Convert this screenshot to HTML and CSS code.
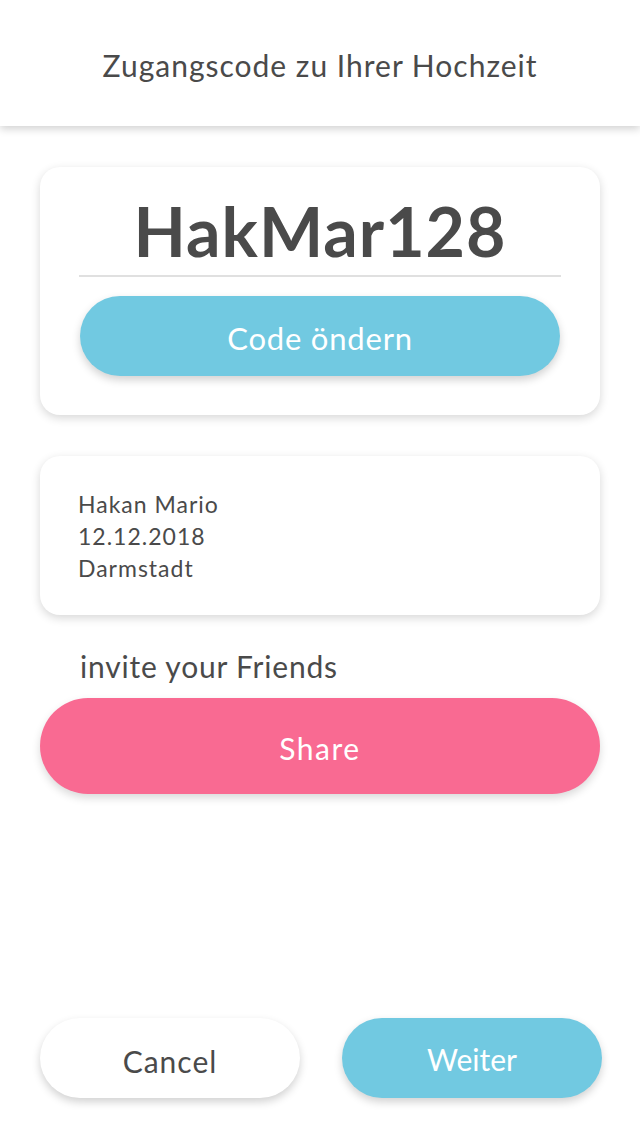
FILE: index.html
```html
<!DOCTYPE html>
<html lang="de">
<head>
<meta charset="utf-8">
<title>Zugangscode</title>
<link rel="stylesheet" href="styles.css">
</head>
<body>
<div class="screen">
  <header class="topbar">
    <h1 class="topbar-title">Zugangscode zu Ihrer Hochzeit</h1>
  </header>
  <main class="content">
    <section class="card code-card">
      <div class="code">HakMar128</div>
      <div class="code-line"></div>
      <button class="btn btn-blue btn-change">Code öndern</button>
    </section>
    <section class="card info-card">
      <div class="info-line">Hakan Mario</div>
      <div class="info-line">12.12.2018</div>
      <div class="info-line">Darmstadt</div>
    </section>
    <div class="invite">invite your Friends</div>
    <button class="btn btn-pink btn-share">Share</button>
  </main>
  <footer class="actions">
    <button class="btn btn-white btn-action btn-cancel">Cancel</button>
    <button class="btn btn-blue btn-action">Weiter</button>
  </footer>
</div>
</body>
</html>
```
FILE: styles.css
```css
* { box-sizing: border-box; }
html, body { margin: 0; padding: 0; background: #fff; }
body {
  font-family: Lato, "Open Sans", "Liberation Sans", sans-serif;
  color: #4a4a4a;
}
.screen {
  width: 640px;
  height: 1136px;
  display: flex;
  flex-direction: column;
  overflow: hidden;
}
.topbar {
  height: 126px;
  flex: none;
  display: flex;
  align-items: center;
  justify-content: center;
  padding-top: 4px;
  background: #fff;
  box-shadow: 0 3px 8px rgba(0,0,0,0.18);
  position: relative;
  z-index: 1;
}
.topbar-title {
  margin: 0;
  font-size: 30px;
  font-weight: 400;
  color: #4a4a4a;
  letter-spacing: 1px;
}
.content {
  padding: 41px 40px 0;
  display: flex;
  flex-direction: column;
}
.card {
  background: #fff;
  border-radius: 20px;
  box-shadow: 0 3px 10px rgba(0,0,0,0.16);
}
.code-card {
  height: 248px;
  padding: 22px 39px 0 39px;
  display: flex;
  flex-direction: column;
  align-items: stretch;
}
.code {
  text-align: center;
  font-size: 68px;
  font-weight: 700;
  line-height: 84px;
  letter-spacing: 1px;
  color: #4a4a4a;
}
.code-line {
  height: 2px;
  background: #e0e0e0;
  margin-top: 2px;
}
.btn {
  border: none;
  font-family: inherit;
  font-size: 30px;
  font-weight: 400;
  border-radius: 999px;
  cursor: pointer;
  padding: 0;
}
.btn-blue { background: #71c9e1; color: #fff; }
.btn-pink { background: #f96a92; color: #fff; }
.btn-white { background: #fff; color: #4a4a4a; }
.btn-change {
  height: 80px;
  margin: 19px 1px 0 1px;
  font-size: 31px;
  letter-spacing: 0.8px;
  padding-top: 3px;
  box-shadow: 0 4px 8px rgba(0,0,0,0.18);
}
.info-card {
  margin-top: 41px;
  height: 159px;
  padding: 32px 38px;
  display: flex;
  flex-direction: column;
}
.info-line {
  font-size: 23px;
  line-height: 32px;
  letter-spacing: 1px;
}
.invite {
  margin-top: 34px;
  padding-left: 40px;
  font-size: 30px;
  line-height: 34px;
  letter-spacing: 0.8px;
}
.btn-share {
  margin-top: 15px;
  height: 96px;
  letter-spacing: 1.5px;
  padding-top: 4px;
  box-shadow: 0 4px 8px rgba(0,0,0,0.15);
}
.actions {
  margin-top: auto;
  padding: 0 38px 38px 40px;
  display: flex;
  justify-content: space-between;
}
.btn-action {
  width: 260px;
  height: 80px;
  padding-top: 2px;
  box-shadow: 0 4px 8px rgba(0,0,0,0.18);
}
.btn-cancel {
  letter-spacing: 1px;
  padding-top: 6px;
}
```
